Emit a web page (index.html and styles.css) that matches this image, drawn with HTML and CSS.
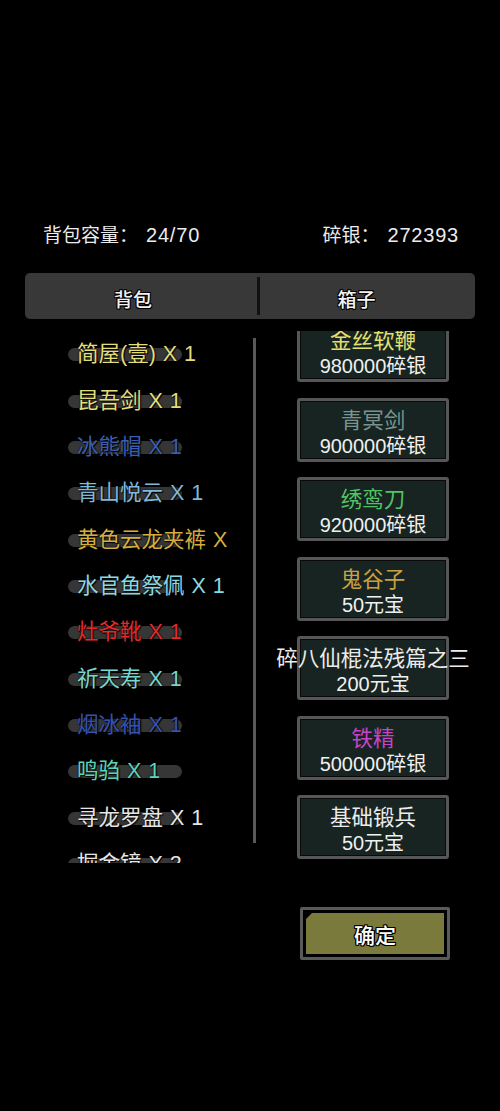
FILE: index.html
```html
<!DOCTYPE html>
<html lang="zh-CN">
<head>
<meta charset="utf-8">
<title>背包</title>
<link rel="stylesheet" href="styles.css">
</head>
<body>
<div class="page">
  <div class="stats">
    <div class="stat"><span class="stat-label">背包容量：</span><span class="stat-value">24/70</span></div>
    <div class="stat"><span class="stat-label">碎银：</span><span class="stat-value">272393</span></div>
  </div>

  <div class="tabs">
    <div class="tab tab-left">背包</div>
    <div class="tab-divider"></div>
    <div class="tab tab-right">箱子</div>
  </div>

  <div class="content">
    <div class="bag-list">
      <div class="item"><span class="item-name c-yellow">简屋(壹) X 1</span></div>
      <div class="item"><span class="item-name c-yellow">昆吾剑 X 1</span></div>
      <div class="item"><span class="item-name c-blue">冰熊帽 X 1</span></div>
      <div class="item"><span class="item-name c-skyblue">青山悦云 X 1</span></div>
      <div class="item"><span class="item-name c-gold">黄色云龙夹裤 X 1</span></div>
      <div class="item"><span class="item-name c-cyan">水官鱼祭佩 X 1</span></div>
      <div class="item"><span class="item-name c-red">灶爷靴 X 1</span></div>
      <div class="item"><span class="item-name c-teal">祈天寿 X 1</span></div>
      <div class="item"><span class="item-name c-deepblue">烟冰袖 X 1</span></div>
      <div class="item"><span class="item-name c-green">鸣驺 X 1</span></div>
      <div class="item"><span class="item-name c-white">寻龙罗盘 X 1</span></div>
      <div class="item"><span class="item-name c-white">掘金镜 X 2</span></div>
    </div>

    <div class="scroll-line"></div>

    <div class="chest">
      <div class="card"><div class="card-title t-yellow">金丝软鞭</div><div class="card-price">980000碎银</div></div>
      <div class="card"><div class="card-title t-grey">青冥剑</div><div class="card-price">900000碎银</div></div>
      <div class="card"><div class="card-title t-green">绣鸾刀</div><div class="card-price">920000碎银</div></div>
      <div class="card"><div class="card-title t-gold">鬼谷子</div><div class="card-price">50元宝</div></div>
      <div class="card"><div class="card-title t-white">碎八仙棍法残篇之三</div><div class="card-price">200元宝</div></div>
      <div class="card"><div class="card-title t-purple">铁精</div><div class="card-price">500000碎银</div></div>
      <div class="card"><div class="card-title t-white">基础锻兵</div><div class="card-price">50元宝</div></div>
    </div>
  </div>

  <div class="footer">
    <div class="confirm"><div class="confirm-fill">确定</div></div>
  </div>
</div>
</body>
</html>
```

FILE: styles.css
```css
html, body {
  margin: 0;
  padding: 0;
  background: #000;
}

.page {
  width: 500px;
  height: 1111px;
  background: #000;
  font-family: "Liberation Sans", "Noto Sans CJK SC", sans-serif;
  color: #e8e8e8;
  overflow: hidden;
}

/* top stats */
.stats {
  display: flex;
  justify-content: space-between;
  padding: 221px 41px 0 43px;
  height: 26px;
  line-height: 26px;
  color: #ececec;
}

.stat-label {
  font-family: "Noto Sans CJK SC", sans-serif;
  font-size: 19px;
}

.stat-value {
  margin-left: 8px;
  font-size: 20px;
  letter-spacing: 0.8px;
}

/* tabs */
.tabs {
  margin: 26px 25px 0 25px;
  height: 46px;
  background: #383838;
  border-radius: 5px;
  display: flex;
  align-items: center;
}

.tab {
  height: 46px;
  line-height: 46px;
  padding-top: 3px;
  box-sizing: border-box;
  text-align: center;
  font-family: "Noto Sans CJK SC", sans-serif;
  font-size: 19px;
  font-weight: 500;
  color: #f2f2f2;
  text-shadow: -1px -1px 0 #000, 1px -1px 0 #000, -1px 1px 0 #000, 1px 1px 0 #000, 0 1px 0 #000, 0 -1px 0 #000;
}

.tab-left {
  width: 232px;
  padding-right: 16px;
}

.tab-right {
  flex: 1;
  padding-right: 22px;
}

.tab-divider {
  width: 3px;
  height: 38px;
  background: #111;
}

/* content */
.content {
  display: flex;
  margin-top: 12px;
  height: 532px;
}

.bag-list {
  width: 253px;
  padding-left: 77px;
  box-sizing: border-box;
  overflow: hidden;
  height: 532px;
}

.item {
  height: 46.35px;
  display: flex;
  align-items: center;
  position: relative;
}

.item::before {
  content: "";
  position: absolute;
  left: -9px;
  width: 114px;
  top: 50%;
  height: 13px;
  margin-top: -6px;
  border-radius: 7px;
  background: #363636;
}

.item-name {
  position: relative;
  font-size: 21.5px;
  line-height: 28px;
  white-space: nowrap;
  max-width: 156px;
  overflow: hidden;
  word-spacing: 1px;
  font-family: "Liberation Sans", "Noto Sans CJK SC", sans-serif;
  text-shadow: 0 0 2px #000, 1px 1px 1px #000;
}

.c-yellow { color: #e4de7a; }
.c-blue { color: #3a5fb2; }
.c-skyblue { color: #80b8d8; }
.c-gold { color: #d6ae3e; }
.c-cyan { color: #8ad8e2; }
.c-red { color: #e22a2a; }
.c-teal { color: #76d8cc; }
.c-deepblue { color: #3452b2; }
.c-green { color: #5ad4bc; }
.c-white { color: #e6e6e6; }

.scroll-line {
  width: 3px;
  height: 505px;
  margin-top: 7px;
  background: #595959;
}

/* chest */
.chest {
  flex: 1;
  height: 532px;
  overflow: hidden;
  padding-left: 41px;
  box-sizing: border-box;
}

.card {
  width: 152px;
  height: 64px;
  margin-top: 15.5px;
  box-sizing: border-box;
  border: 3px solid #565656;
  border-radius: 3px;
  background: #172421;
  box-shadow: inset 0 0 0 1px #0a0a0a;
  display: flex;
  flex-direction: column;
  align-items: center;
  padding-top: 8px;
}

.card:first-child {
  margin-top: -13px;
}

.card-title,
.card-price {
  font-family: "Liberation Sans", "Noto Sans CJK SC", sans-serif;
  line-height: 25px;
  white-space: nowrap;
}

.card-title {
  font-size: 21.5px;
}

.card-price {
  font-size: 20px;
  color: #f0f0f0;
}

.t-yellow { color: #e2e070; }
.t-grey { color: #7a9490; }
.t-green { color: #52c264; }
.t-gold { color: #c9a23f; }
.t-white { color: #ececec; }
.t-purple { color: #c444c8; }

/* footer */
.footer {
  padding-top: 44px;
  padding-left: 300px;
}

.confirm {
  width: 150px;
  height: 53px;
  box-sizing: border-box;
  border: 3px solid #5a5a5a;
  border-radius: 2px;
  background: #000;
  padding: 3px;
}

.confirm-fill {
  height: 100%;
  background: #7b7a3d;
  clip-path: polygon(6px 0, 100% 0, 100% 100%, 0 100%, 0 6px);
  display: flex;
  align-items: center;
  justify-content: center;
  font-family: "Noto Sans CJK SC", sans-serif;
  font-size: 21px;
  font-weight: 500;
  color: #fff;
  text-shadow: -1px -1px 0 #000, 1px -1px 0 #000, -1px 1px 0 #000, 1px 1px 0 #000, 0 1px 0 #000, 0 -1px 0 #000, 1px 0 0 #000, -1px 0 0 #000;
}
```
